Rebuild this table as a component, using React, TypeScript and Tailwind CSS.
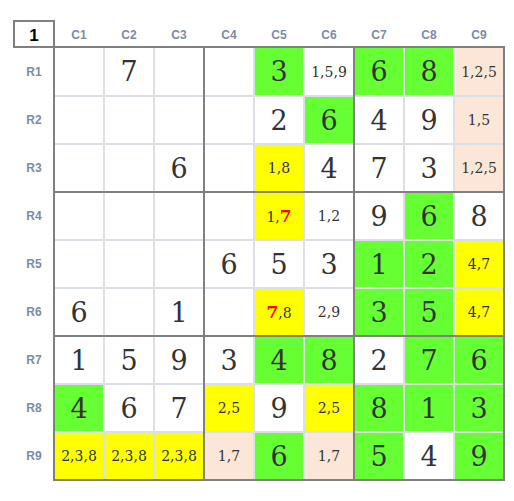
import React from "react";

type Cell = { v?: string; bg?: string; small?: boolean; red?: number };

const G = "bg-[#66ff33]";
const Y = "bg-[#ffff00]";
const P = "bg-[#fce6d8]";
const W = "bg-white";

const rows: Cell[][] = [
  [{}, { v: "7" }, {}, {}, { v: "3", bg: G }, { v: "1,5,9", small: true }, { v: "6", bg: G }, { v: "8", bg: G }, { v: "1,2,5", small: true, bg: P }],
  [{}, {}, {}, {}, { v: "2" }, { v: "6", bg: G }, { v: "4" }, { v: "9" }, { v: "1,5", small: true, bg: P }],
  [{}, {}, { v: "6" }, {}, { v: "1,8", small: true, bg: Y }, { v: "4" }, { v: "7" }, { v: "3" }, { v: "1,2,5", small: true, bg: P }],
  [{}, {}, {}, {}, { v: "1,7", small: true, bg: Y, red: 1 }, { v: "1,2", small: true }, { v: "9" }, { v: "6", bg: G }, { v: "8" }],
  [{}, {}, {}, { v: "6" }, { v: "5" }, { v: "3" }, { v: "1", bg: G }, { v: "2", bg: G }, { v: "4,7", small: true, bg: Y }],
  [{ v: "6" }, {}, { v: "1" }, {}, { v: "7,8", small: true, bg: Y, red: 0 }, { v: "2,9", small: true }, { v: "3", bg: G }, { v: "5", bg: G }, { v: "4,7", small: true, bg: Y }],
  [{ v: "1" }, { v: "5" }, { v: "9" }, { v: "3" }, { v: "4", bg: G }, { v: "8", bg: G }, { v: "2" }, { v: "7", bg: G }, { v: "6", bg: G }],
  [{ v: "4", bg: G }, { v: "6" }, { v: "7" }, { v: "2,5", small: true, bg: Y }, { v: "9" }, { v: "2,5", small: true, bg: Y }, { v: "8", bg: G }, { v: "1", bg: G }, { v: "3", bg: G }],
  [{ v: "2,3,8", small: true, bg: Y }, { v: "2,3,8", small: true, bg: Y }, { v: "2,3,8", small: true, bg: Y }, { v: "1,7", small: true, bg: P }, { v: "6", bg: G }, { v: "1,7", small: true, bg: P }, { v: "5", bg: G }, { v: "4" }, { v: "9", bg: G }],
];

const serif = { fontFamily: '"DejaVu Serif", serif' };

function CellView({ c, h }: { c: Cell; h: string }) {
  const bg = c.bg ?? W;
  let content: React.ReactNode = null;
  if (c.v) {
    if (c.small) {
      const parts = c.v.split(",");
      content = (
        <span className="text-[14px] text-[#333]">
          {parts.map((p, i) => (
            <React.Fragment key={i}>
              {i > 0 && ","}
              {c.red === i ? <span className="text-[17px] font-bold text-[#ff0000]">{p}</span> : p}
            </React.Fragment>
          ))}
        </span>
      );
    } else {
      content = <span className="text-[27px] text-[#333]">{c.v}</span>;
    }
  }
  return (
    <div className={`${bg} ${h} w-[48px] flex items-center justify-center leading-none`} style={serif}>
      {content}
    </div>
  );
}

function Box({ br, bc }: { br: number; bc: number }) {
  const cells: React.ReactNode[] = [];
  for (let r = 0; r < 3; r++) {
    for (let c = 0; c < 3; c++) {
      const R = br * 3 + r;
      const C = bc * 3 + c;
      cells.push(<CellView key={`${r}-${c}`} c={rows[R][C]} h={R === 0 ? "h-[47px]" : "h-[46px]"} />);
    }
  }
  return <div className="grid grid-cols-[repeat(3,48px)] gap-[2px] bg-[#dcdfe8]">{cells}</div>;
}

export default function App() {
  const label = "text-[12px] font-bold text-[#7d8ba5]";
  const sans = { fontFamily: '"Liberation Sans", Arial, sans-serif' };
  return (
    <div className="bg-white w-[514px] h-[501px] pl-[13px] pt-[20px]" style={sans}>
      <div className="flex">
        <div className="w-[42px] h-[26px] border-l-2 border-t-2 border-r-2 border-[#808080] flex items-center justify-center">
          <span className="text-[17px] font-bold text-black leading-none mt-[2px]">1</span>
        </div>
        <div className="flex gap-[2px] pl-0">
          {Array.from({ length: 9 }, (_, i) => (
            <div key={i} className={`w-[48px] h-[26px] flex items-center justify-center pt-[4px] ${label}`}>
              C{i + 1}
            </div>
          ))}
        </div>
      </div>
      <div className="flex">
        <div className="w-[40px] border-t-2 border-[#808080] flex flex-col gap-[2px]">
          {Array.from({ length: 9 }, (_, i) => (
            <div key={i} className={`${i === 0 ? "h-[47px]" : "h-[46px]"} flex items-center justify-center pl-[2px] ${label}`}>
              R{i + 1}
            </div>
          ))}
        </div>
        <div className="border-2 border-[#808080] bg-[#808080] grid grid-cols-[repeat(3,148px)] gap-[2px]">
          {[0, 1, 2].map((br) => [0, 1, 2].map((bc) => <Box key={`${br}-${bc}`} br={br} bc={bc} />))}
        </div>
      </div>
    </div>
  );
}
